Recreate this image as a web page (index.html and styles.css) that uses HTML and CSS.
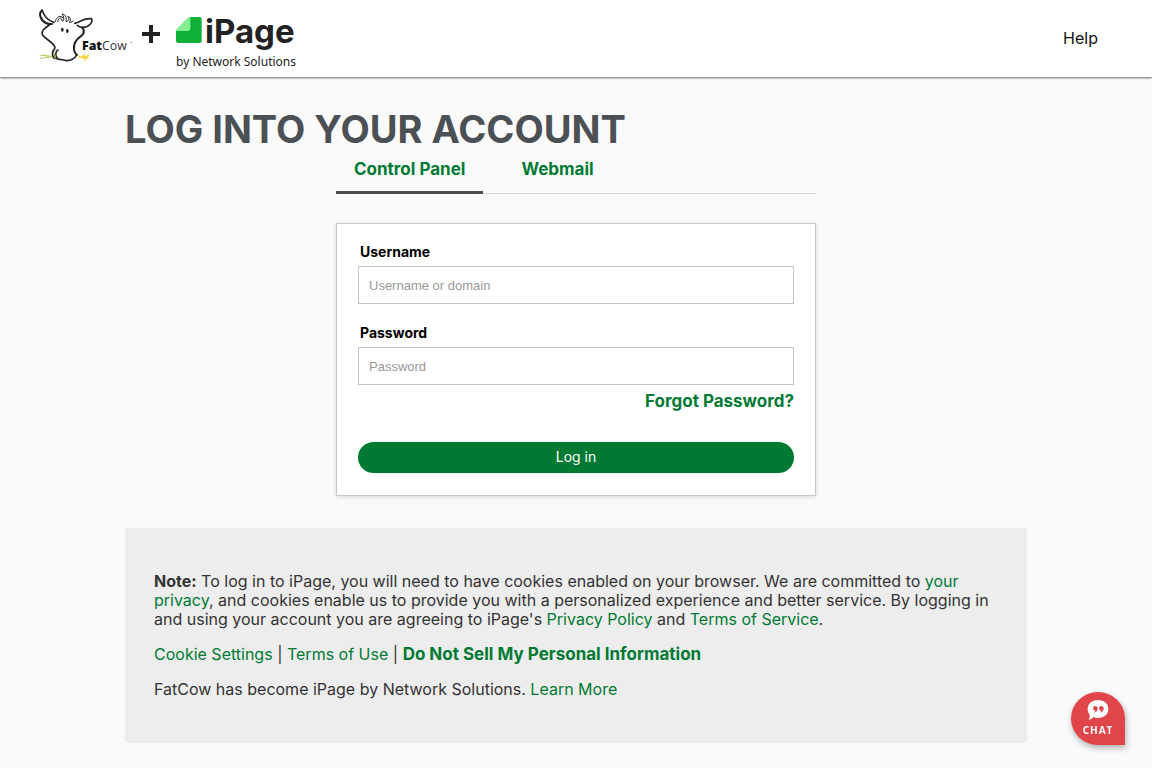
FILE: index.html
```html
<!DOCTYPE html>
<html lang="en">
<head>
    <meta charset="UTF-8">
    <meta name="viewport" content="width=device-width, initial-scale=1">
    <title>Log in | iPage</title>
    <link rel="stylesheet" href="styles.css">
</head>
<body>

    <header class="header">
        <a href="#" class="logos" aria-label="FatCow and iPage by Network Solutions">
            <svg class="logo-cow" width="96" height="56" viewBox="24 24 288 168" aria-hidden="true">
                <g fill="none" stroke="#222" stroke-width="5" stroke-linecap="round" stroke-linejoin="round">
                    <!-- ears -->
                    <path d="M36 34C24 44 33 66 48 72Q56 76 66 75" stroke-width="6"/>
                    <path d="M36 34C42 40 40 60 72 70"/>
                    <path d="M134 73C154 68 160 57 184 59C192 66 176 88 156 85Q148 84 142 79"/>
                    <!-- hair -->
                    <path d="M76 67C80 52 92 48 98 56M84 68C82 56 96 52 96 66C104 70 102 50 96 45C108 46 110 58 108 68C118 66 118 56 113 52C124 56 122 64 118 70Q128 70 130 66" stroke-width="3"/>
                    <!-- head -->
                    <path d="M58 78C44 88 33 95 37 106C43 120 68 126 75 145"/>
                    <path d="M157 86C165 96 162 106 152 112C137 122 130 136 132 153Q135 164 141 168" stroke-width="6"/>
                    <path d="M74 149C67 157 64 171 73 178M84 153C76 156 75 171 82 178M76 177C90 184 98 181 105 184C120 187 134 180 140 168"/>
                </g>
                <ellipse cx="97" cy="92" rx="4" ry="6" fill="#222"/>
                <ellipse cx="112" cy="96" rx="4" ry="6" fill="#222"/>
                <!-- straw -->
                <path d="M29 168L67 172M30 178L66 173M42 166L56 178" fill="none" stroke="#bcc765" stroke-width="3"/>
                <path d="M73 164L76 178" stroke="#8da62c" stroke-width="5"/>
                <path d="M142 168L156 173L160 164L166 171L180 166L172 175L180 178L168 179L162 188L161 178L148 177" fill="#f3d63a"/>
                <text x="156" y="153" class="cow-name"><tspan class="cow-fat">Fat</tspan>Cow</text>
                <circle cx="304" cy="130" r="2" fill="#666"/>
            </svg>

            <svg class="logo-plus" width="20" height="20" viewBox="0 0 20 20" aria-hidden="true">
                <path d="M10 1V19M1 10H19" stroke="#222" stroke-width="4"/>
            </svg>

            <span class="logo-ipage">
                <span class="ipage-mark">
                    <svg width="26" height="28" viewBox="0 0 78 84" aria-hidden="true">
                        <path d="M42 0H71Q77 0 77 6V72Q77 78 71 78H7Q0 78 0 71V42Z" fill="#0fb037"/>
                        <path d="M43 0V35Q43 42 36 42H0Q1 36 5 33L34 4Q38 0 43 0Z" fill="#84ef91"/>
                    </svg>
                    <span class="ipage-name">iPage</span>
                </span>
                <span class="ipage-by">by Network Solutions</span>
            </span>
        </a>
        <a href="#" class="help">Help</a>
    </header>

    <main class="container">
        <h1>LOG INTO YOUR ACCOUNT</h1>

        <div class="login">
            <nav class="tabs">
                <a href="#" class="tab active">Control Panel</a>
                <a href="#" class="tab">Webmail</a>
            </nav>

            <form class="card">
                <label for="username">Username</label>
                <input type="text" name="username" id="username" placeholder="Username or domain">

                <label for="password">Password</label>
                <input type="password" name="password" id="password" placeholder="Password">

                <a href="#" class="forgot">Forgot Password?</a>
                <button type="submit">Log in</button>
            </form>
        </div>

        <section class="note">
            <p><strong>Note:</strong> To log in to iPage, you will need to have cookies enabled on your browser. We are committed to <a href="#">your privacy</a>, and cookies enable us to provide you with a personalized experience and better service. By logging in and using your account you are agreeing to iPage's <a href="#">Privacy Policy</a> and <a href="#">Terms of Service</a>.</p>
            <p><a href="#">Cookie Settings</a> | <a href="#">Terms of Use</a> | <a href="#" class="do-not-sell">Do Not Sell My Personal Information</a></p>
            <p>FatCow has become iPage by Network Solutions. <a href="#">Learn More</a></p>
        </section>
    </main>

    <button type="button" class="chat">
        <svg width="22" height="20" viewBox="0 0 66 60" aria-hidden="true">
            <path d="M33 0C52 0 64 11 64 27C64 43 51 54 33 54C28 54 24 53 20 51Q13 59 5 59Q10 52 8 44C4 39 2 34 2 27C2 11 15 0 33 0Z" fill="#fff"/>
            <path d="M25 18A7 7 0 1 0 25 32Q24 36 20 39Q32 35 32 26Q32 18 25 18ZM43 18A7 7 0 1 0 43 32Q42 36 38 39Q50 35 50 26Q50 18 43 18Z" fill="#e0454a"/>
        </svg>
        <span>CHAT</span>
    </button>

</body>
</html>
```

FILE: styles.css
```css
* {box-sizing: border-box}

body {
    margin: 0;
    background-color: #fafafa;
    color: #333;
    font: 16px/19px Inter, sans-serif;
}

a {
    color: #007a33;
    text-decoration: none;
}

/* ----- Header ----- */

.header {
    display: flex;
    justify-content: space-between;
    align-items: center;
    height: 77px;
    padding: 0 54px 0 38px;
    background-color: #fff;
    box-shadow: 0 1px 2px rgba(0, 0, 0, 0.6);
}

.logos {
    display: flex;
    align-items: flex-start;
    color: #222;
}

.logo-plus {
    margin: 17px 15px 0 7px;
}

.cow-name {
    font: 37px "Open Sans", sans-serif;
    fill: #333;
}

.cow-fat {
    font-weight: 800;
    fill: #111;
}

.logo-ipage {
    display: flex;
    flex-direction: column;
    padding-top: 10px;
}

.ipage-mark {
    display: flex;
    gap: 3px;
    height: 37px;
}

.ipage-name {
    font-size: 33px;
    font-weight: 700;
    line-height: 28px;
}

.ipage-by {
    font: 12px/16px "Noto Sans", sans-serif;
}

.help {
    color: #111;
}

/* ----- Login ----- */

.container {
    max-width: 902px;
    margin: 0 auto 26px;
}

h1 {
    margin: 0;
    padding-top: 30px;
    font-size: 38px;
    line-height: 44px;
    color: #4b5054;
}

.login {
    max-width: 480px;
    margin: 0 auto 32px;
}

.tabs {
    display: flex;
    gap: 20px;
    margin-bottom: 29px;
    border-bottom: 1px solid #d8d9da;
}

.tab {
    padding: 9px 18px 12px;
    margin-bottom: -1px;
    border-bottom: 3px solid transparent;
    font-size: 17px;
    font-weight: 700;
}

.tab.active {
    border-color: #4b5054;
}

.card {
    display: flex;
    flex-direction: column;
    padding: 18px 21px 22px;
    background-color: #fff;
    border: 1px solid #c8c8c8;
    box-shadow: 0 1px 4px rgba(0, 0, 0, 0.15);
}

label {
    padding-left: 2px;
    margin-bottom: 5px;
    font-size: 14px;
    font-weight: 700;
    color: #000;
}

input {
    width: 100%;
    height: 38px;
    margin-bottom: 19px;
    padding: 0 10px;
    border: 1px solid #c4c4c4;
    font: 13px "Liberation Sans", sans-serif;
}

input::placeholder {
    color: #999;
}

#password {
    margin-bottom: 7px;
}

.forgot {
    align-self: flex-end;
    margin-bottom: 31px;
    font-size: 17px;
    font-weight: 700;
}

.card button {
    height: 31px;
    padding: 0 0 2px;
    border: 0;
    border-radius: 16px;
    background-color: #007a33;
    color: #fff;
    font: 14px Inter, sans-serif;
    cursor: pointer;
}

/* ----- Note ----- */

.note {
    padding: 44px 29px 28px;
    background-color: #ededed;
}

.note p {
    margin: 0 0 16px;
}

.do-not-sell {
    font-size: 17px;
    font-weight: 700;
}

/* ----- Chat ----- */

.chat {
    position: fixed;
    right: 27px;
    bottom: 23px;
    display: flex;
    flex-direction: column;
    align-items: center;
    gap: 3px;
    width: 54px;
    height: 53px;
    padding: 8px 0 0;
    border: 0;
    border-radius: 50% 50% 0 50%;
    background-color: #e0454a;
    box-shadow: 1px 3px 6px rgba(0, 0, 0, 0.3);
    color: #fff;
    font: 700 10px/14px "Open Sans", sans-serif;
    letter-spacing: 1px;
    cursor: pointer;
}
```
